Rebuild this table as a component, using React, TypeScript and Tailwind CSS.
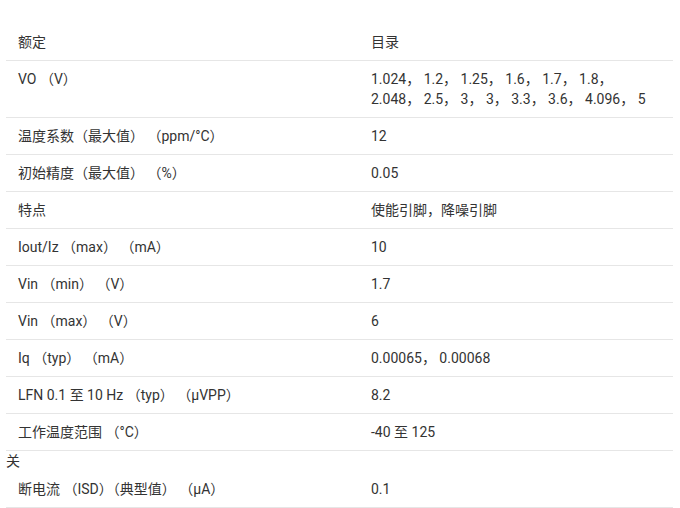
export default function App() {
  const rows: [string, React.ReactNode][] = [
    ["VO （V）", <>1.024， 1.2， 1.25， 1.6， 1.7， 1.8，<br />2.048， 2.5， 3， 3， 3.3， 3.6， 4.096， 5</>],
    ["温度系数（最大值） （ppm/°C）", "12"],
    ["初始精度（最大值） （%）", "0.05"],
    ["特点", "使能引脚，降噪引脚"],
    ["Iout/Iz （max） （mA）", "10"],
    ["Vin （min） （V）", "1.7"],
    ["Vin （max） （V）", "6"],
    ["Iq （typ） （mA）", "0.00065， 0.00068"],
    ["LFN 0.1 至 10 Hz （typ） （μVPP）", "8.2"],
    ["工作温度范围 （°C）", "-40 至 125"],
  ];

  return (
    <div
      className="pt-[24px] pl-[6px] pr-[7px] text-[14px] leading-5 text-[#333]"
      style={{ fontFamily: 'Roboto, "Noto Sans CJK SC", sans-serif' }}
    >
      <div className="flex border-b border-[#e6e6e6]">
        <div className="w-[353px] px-3 py-2">额定</div>
        <div className="flex-1 px-3 py-2">目录</div>
      </div>
      {rows.map(([k, v], i) => (
        <div key={i} className="flex border-b border-[#e6e6e6]">
          <div className="w-[353px] px-3 py-2">{k}</div>
          <div className="flex-1 px-3 py-2">{v}</div>
        </div>
      ))}
      <div>关</div>
      <div className="flex border-b border-[#e6e6e6]">
        <div className="w-[353px] px-3 py-2">断电流 （ISD）（典型值） （μA）</div>
        <div className="flex-1 px-3 py-2">0.1</div>
      </div>
    </div>
  );
}
